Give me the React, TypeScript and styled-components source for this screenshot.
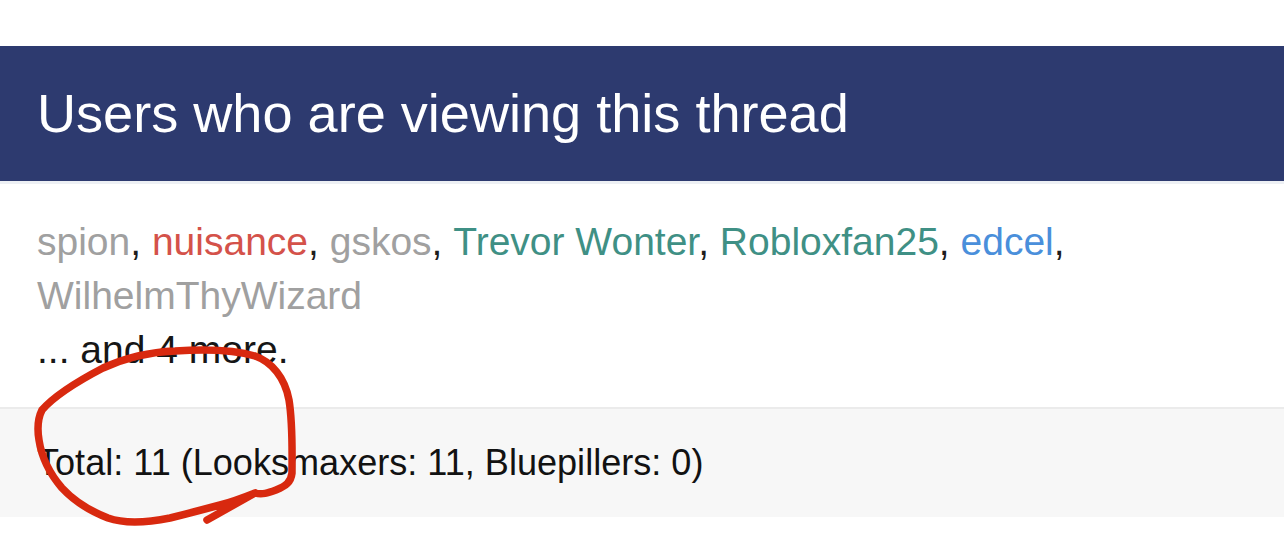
import React from "react";
import styled, { createGlobalStyle } from "styled-components";

const GlobalStyle = createGlobalStyle`
  html, body {
    margin: 0;
    padding: 0;
    background: #ffffff;
  }
  body {
    font-family: "Liberation Sans", Arial, Helvetica, sans-serif;
    color: #1a1a1a;
  }
`;

const Page = styled.div`
  position: relative;
  width: 1284px;
  height: 545px;
  padding-top: 46px;
  box-sizing: border-box;
  overflow: hidden;
`;

const Block = styled.section`
  display: flex;
  flex-direction: column;
`;

const BlockHeader = styled.h3`
  margin: 0;
  height: 135px;
  padding: 0 37px;
  background: #2d3a6f;
  color: #ffffff;
  font-weight: 400;
  font-size: 54.1px;
  line-height: 135px;
  border-bottom: 3px solid #edf0f4;
  white-space: nowrap;
`;

const BlockBody = styled.div`
  padding: 30.6px 37px 30px;
  font-size: 39px;
  line-height: 54px;
  color: #1d1d1d;
  border-bottom: 2.5px solid #ebebeb;
`;

const UserList = styled.ul`
  list-style: none;
  margin: 0;
  padding: 0;
  display: inline;
`;

const UserItem = styled.li`
  display: inline;
`;

type Tone = "guest" | "staff" | "member" | "verified";

const toneColor: Record<Tone, string> = {
  guest: "#a0a0a0",
  staff: "#d4524a",
  member: "#3f9085",
  verified: "#4a8fdb",
};

const UserLink = styled.a<{ $tone: Tone }>`
  color: ${(p) => toneColor[p.$tone]};
  text-decoration: none;
`;

const More = styled.div`
  color: #161616;
`;

const BlockFooter = styled.div`
  height: 108px;
  padding: 0 37px;
  background: #f7f7f7;
  font-size: 36.1px;
  line-height: 108px;
  color: #121212;
  white-space: nowrap;
`;

const Scribble = styled.svg`
  position: absolute;
  left: 0;
  top: 0;
  width: 1284px;
  height: 545px;
  pointer-events: none;
`;

const users: { name: string; tone: Tone }[] = [
  { name: "spion", tone: "guest" },
  { name: "nuisance", tone: "staff" },
  { name: "gskos", tone: "guest" },
  { name: "Trevor Wonter", tone: "member" },
  { name: "Robloxfan25", tone: "member" },
  { name: "edcel", tone: "verified" },
  { name: "WilhelmThyWizard", tone: "guest" },
];

export default function App() {
  return (
    <>
      <GlobalStyle />
      <Page>
        <Block>
          <BlockHeader>Users who are viewing this thread</BlockHeader>
          <BlockBody>
            <UserList>
              {users.map((u, i) => (
                <UserItem key={u.name}>
                  <UserLink $tone={u.tone} href="#">
                    {u.name}
                  </UserLink>
                  {i < users.length - 1 ? ", " : ""}
                </UserItem>
              ))}
            </UserList>
            <More>... and 4 more.</More>
          </BlockBody>
          <BlockFooter>Total: 11 (Looksmaxers: 11, Bluepillers: 0)</BlockFooter>
        </Block>
        <Scribble viewBox="0 0 1284 545">
          <path
            d="M 255 493 C 245 497 232 502 220 505 C 205 509 190 513 170 518 C 150 522 125 524 108 518 C 90 511 75 502 62 488 C 50 474 42 460 39 440 C 37 428 38 418 42 410 C 55 395 80 380 103 368 C 125 358 150 352 175 351 C 205 349 235 350 255 356 C 272 362 285 378 289 400 C 293 425 292 455 292 473 C 291 482 286 486 276 490 C 268 493 262 495 255 493 L 207 520"
            fill="none"
            stroke="#d8290f"
            strokeWidth="7.5"
            strokeLinecap="round"
            strokeLinejoin="round"
          />
        </Scribble>
      </Page>
    </>
  );
}
